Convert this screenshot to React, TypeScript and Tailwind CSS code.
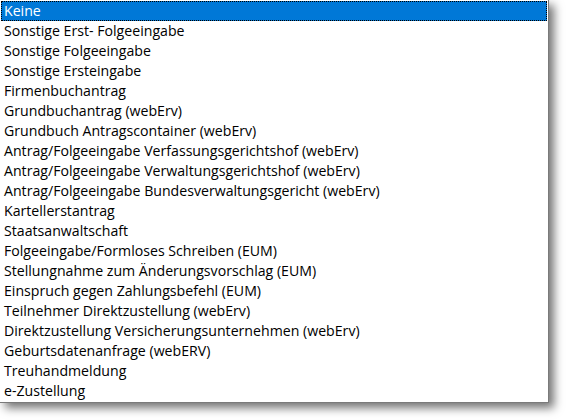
const items = [
  'Keine',
  'Sonstige Erst- Folgeeingabe',
  'Sonstige Folgeeingabe',
  'Sonstige Ersteingabe',
  'Firmenbuchantrag',
  'Grundbuchantrag (webErv)',
  'Grundbuch Antragscontainer (webErv)',
  'Antrag/Folgeeingabe Verfassungsgerichtshof (webErv)',
  'Antrag/Folgeeingabe Verwaltungsgerichtshof (webErv)',
  'Antrag/Folgeeingabe Bundesverwaltungsgericht (webErv)',
  'Kartellerstantrag',
  'Staatsanwaltschaft',
  'Folgeeingabe/Formloses Schreiben (EUM)',
  'Stellungnahme zum Änderungsvorschlag (EUM)',
  'Einspruch gegen Zahlungsbefehl (EUM)',
  'Teilnehmer Direktzustellung (webErv)',
  'Direktzustellung Versicherungsunternehmen (webErv)',
  'Geburtsdatenanfrage (webERV)',
  'Treuhandmeldung',
  'e-Zustellung',
];

export default function App() {
  return (
    <div className="w-[566px] h-[420px] bg-white">
      <div className="w-[549px] h-[403px] bg-white border-r border-b border-[#7a7a7a] shadow-[5px_5px_9px_rgba(0,0,0,0.55)] pt-px pl-px pr-px font-['Open_Sans',sans-serif] text-[14.15px] text-[#000]">
        {items.map((item, i) => (
          <div
            key={item}
            className={
              i === 0
                ? 'h-5 leading-5 pl-[3px] bg-[#0078d7] text-white outline-1 outline-dotted outline-[#000] -outline-offset-1'
                : 'h-5 leading-5 pl-[3px]'
            }
          >
            {item}
          </div>
        ))}
      </div>
    </div>
  );
}
